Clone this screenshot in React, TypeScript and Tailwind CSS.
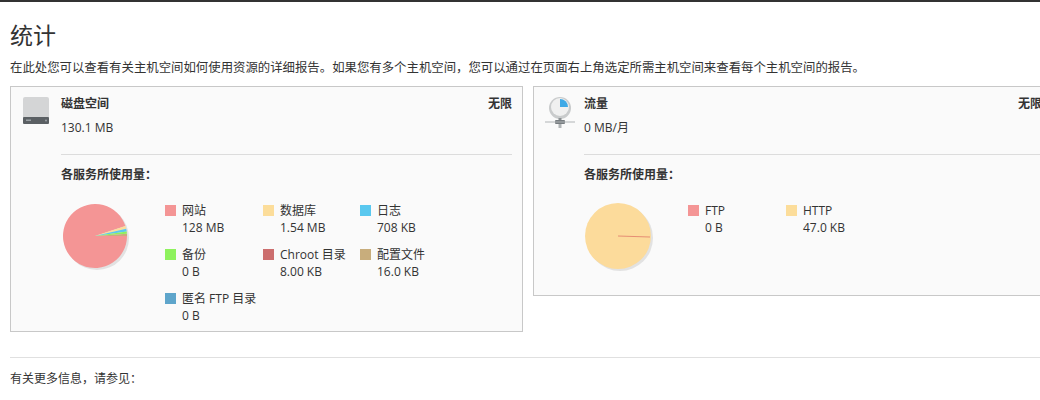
import React from "react"

const font = { fontFamily: '"Open Sans", "Noto Sans CJK SC", sans-serif' }

type Item = { label: string; value: string; color: string }

const diskItems: Item[] = [
  { label: "网站", value: "128 MB", color: "bg-[#f49595]" },
  { label: "数据库", value: "1.54 MB", color: "bg-[#fcdd9a]" },
  { label: "日志", value: "708 KB", color: "bg-[#5ac8ef]" },
  { label: "备份", value: "0 B", color: "bg-[#8ef25d]" },
  { label: "Chroot 目录", value: "8.00 KB", color: "bg-[#cc6e6e]" },
  { label: "配置文件", value: "16.0 KB", color: "bg-[#c8ad7c]" },
  { label: "匿名 FTP 目录", value: "0 B", color: "bg-[#5ea5cb]" },
]

const trafficItems: Item[] = [
  { label: "FTP", value: "0 B", color: "bg-[#f49595]" },
  { label: "HTTP", value: "47.0 KB", color: "bg-[#fcdd9a]" },
]

function Slice({ a0, a1, color }: { a0: number; a1: number; color: string }) {
  const r = 32
  const p = (a: number) => [34 + r * Math.cos((a * Math.PI) / 180), 34 - r * Math.sin((a * Math.PI) / 180)]
  const [x0, y0] = p(a0)
  const [x1, y1] = p(a1)
  return <path d={`M34 34 L${x0} ${y0} A${r} ${r} 0 ${a1 - a0 > 180 ? 1 : 0} 0 ${x1} ${y1} Z`} fill={color} />
}

function DiskPie() {
  return (
    <svg width="72" height="72" viewBox="0 0 72 72">
      <circle cx="36" cy="36" r="32" fill="#e2e2e2" />
      <Slice a0={18} a1={360} color="#f49595" />
      <Slice a0={13} a1={18} color="#fcdd9a" />
      <Slice a0={8} a1={13} color="#5ac8ef" />
      <Slice a0={4} a1={8} color="#8ef25d" />
      <Slice a0={0} a1={4} color="#c8ad7c" />
    </svg>
  )
}

function TrafficPie() {
  return (
    <svg width="72" height="72" viewBox="0 0 72 72">
      <circle cx="36" cy="36" r="33" fill="#e2e2e2" />
      <circle cx="34" cy="34" r="33" fill="#fcdb9b" />
      <line x1="34" y1="34" x2="66" y2="35" stroke="#e07a6a" strokeWidth="0.8" />
    </svg>
  )
}

function DiskIcon() {
  return (
    <svg width="30" height="32" viewBox="0 0 30 32">
      <rect x="2" y="2" width="26" height="24" rx="2" fill="#d4d5d6" />
      <rect x="2" y="22" width="26" height="7" rx="1" fill="#5b6064" />
      <rect x="5" y="24.5" width="5" height="1.5" fill="#9aa0a4" />
      <circle cx="25" cy="25.5" r="1" fill="#9aa0a4" />
    </svg>
  )
}

function TrafficIcon() {
  return (
    <svg width="32" height="34" viewBox="0 0 32 34">
      <circle cx="16" cy="13" r="11" fill="#c9cbcc" />
      <circle cx="16" cy="12" r="9" fill="#f0f0f0" />
      <path d="M16 12 L16 4 A8 8 0 0 1 24 12 Z" fill="#3fa9e6" />
      <rect x="14.5" y="23" width="3" height="3" fill="#8a8f92" />
      <rect x="11" y="25" width="10" height="4" rx="1" fill="#777c80" />
      <rect x="1" y="26.5" width="30" height="1" fill="#b0b4b6" />
      <rect x="14.5" y="29" width="3" height="4" fill="#b0b4b6" />
    </svg>
  )
}

function Legend({ items }: { items: Item[] }) {
  return (
    <div className="grid grid-cols-[98px_97px_97px] gap-y-[10px] pt-[5px]">
      {items.map((it) => (
        <div key={it.label} className="flex gap-[6px]">
          <span className={`w-[11px] h-[11px] mt-[3px] shrink-0 ${it.color}`} />
          <div className="leading-[17px]">
            <div>{it.label}</div>
            <div>{it.value}</div>
          </div>
        </div>
      ))}
    </div>
  )
}

function Card({
  icon, title, value, pie, items, className,
}: { icon: React.ReactNode; title: string; value: string; pie: React.ReactNode; items: Item[]; className: string }) {
  return (
    <div className={`bg-[#fafafa] border border-[#c8c8c8] flex shrink-0 pt-[7px] ${className}`}>
      <div className="w-[50px] pl-[10px] pt-[1px] shrink-0">{icon}</div>
      <div className="flex-1 pr-[10px]">
        <div className="flex justify-between font-bold leading-[18px] pt-[1px]">
          <span>{title}</span>
          <span>无限</span>
        </div>
        <div className="mt-[6px] leading-[18px]">{value}</div>
        <div className="border-t border-[#dcdcdc] mt-[17px]" />
        <div className="font-bold mt-[11px] leading-[18px]">各服务所使用量：</div>
        <div className="flex mt-[13px]">
          <div className="w-[104px] shrink-0 pt-[5px]">{pie}</div>
          <Legend items={items} />
        </div>
      </div>
    </div>
  )
}

export default function App() {
  return (
    <div className="w-[1040px] h-[400px] overflow-hidden bg-white text-[12px] text-[#333]" style={font}>
      <div className="h-[2px] bg-[#333]" />
      <div className="pl-[10px]">
        <h1 className="text-[23px] leading-[30px] mt-[18px] text-[#333]">统计</h1>
        <p className="mt-[9px] leading-[18px] text-[12.4px] whitespace-nowrap">
          在此处您可以查看有关主机空间如何使用资源的详细报告。如果您有多个主机空间，您可以通过在页面右上角选定所需主机空间来查看每个主机空间的报告。
        </p>
        <div className="flex items-start gap-[10px] mt-[9px]">
          <Card className="w-[513px] h-[246px]" icon={<DiskIcon />} title="磁盘空间" value="130.1 MB" pie={<DiskPie />} items={diskItems} />
          <Card className="w-[520px] h-[210px]" icon={<TrafficIcon />} title="流量" value="0 MB/月" pie={<TrafficPie />} items={trafficItems} />
        </div>
        <div className="border-t border-[#e0e0e0] mt-[25px]" />
        <div className="mt-[12px] leading-[18px]">有关更多信息，请参见：</div>
      </div>
    </div>
  )
}
